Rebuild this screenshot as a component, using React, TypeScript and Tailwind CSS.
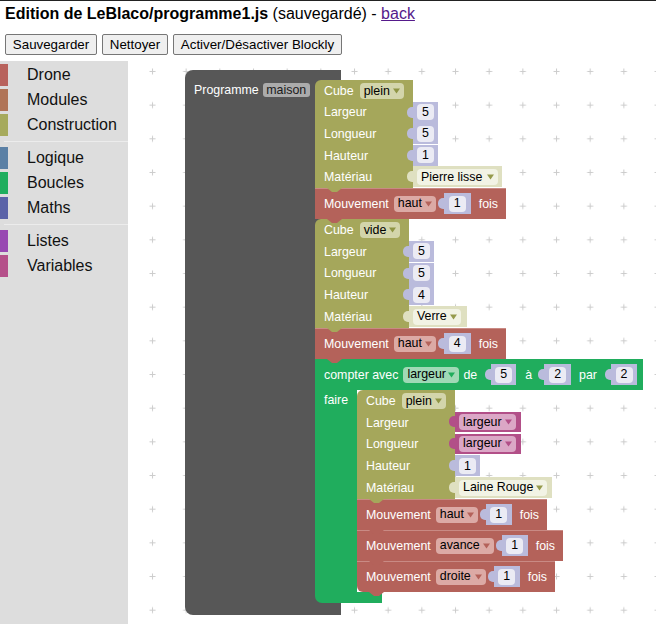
import React from "react";

function Arrow({ fill }: { fill: string }) {
  return (
    <svg width="7" height="6" viewBox="0 0 7 6" className="shrink-0">
      <path d="M0 0.5H7L3.5 5.5Z" className={fill} />
    </svg>
  );
}

function Dropdown({
  label,
  w,
  bg,
  arrow,
  cls = "",
}: {
  label: string;
  w: string;
  bg: string;
  arrow: string;
  cls?: string;
}) {
  return (
    <div
      className={`${w} h-[16px] ${bg} ${cls} rounded-[4px] flex items-center justify-between pl-[4px] pr-[4px] text-black shrink-0`}
    >
      <span className="leading-none">{label}</span>
      <Arrow fill={arrow} />
    </div>
  );
}

function Num({ v, w = "w-[25px]", cls = "" }: { v: string; w?: string; cls?: string }) {
  return (
    <div className={`relative ${w} h-[21px] bg-[#babbdc] flex items-center justify-center shrink-0 ${cls}`}>
      <div className="absolute left-[-6px] top-[5px] w-[6px] h-[11px] rounded-l-[5px] bg-[#babbdc]" />
      <div className="w-[17px] h-[16px] rounded-[4px] bg-[#ebebf4] flex items-center justify-center text-black leading-none">
        {v}
      </div>
    </div>
  );
}

function Mat({ label, w, fw }: { label: string; w: string; fw: string }) {
  return (
    <div className={`relative ${w} h-[21px] bg-[#dfe0c1] flex items-center pl-[4px] shrink-0`}>
      <div className="absolute left-[-6px] top-[5px] w-[6px] h-[11px] rounded-l-[5px] bg-[#dfe0c1]" />
      <Dropdown label={label} w={fw} bg="bg-[#f2f3e5]" arrow="fill-[#959a4c]" />
    </div>
  );
}

function Var() {
  return (
    <div className="relative w-[66px] h-[20px] bg-[#b24f88] flex items-center pl-[4px] shrink-0">
      <div className="absolute left-[-6px] top-[4px] w-[6px] h-[11px] rounded-l-[5px] bg-[#b24f88]" />
      <Dropdown label="largeur" w="w-[57px]" bg="bg-[#dba7c6]" arrow="fill-[#b24f88]" />
    </div>
  );
}

function Notch({ fill }: { fill: string }) {
  return (
    <svg width="15" height="4" viewBox="0 0 15 4" className="absolute left-[12px] bottom-[-4px] z-10">
      <path d="M0 0L5 4H10L15 0Z" className={fill} />
    </svg>
  );
}

type Row = { label: string; value: React.ReactNode };

function Cube({
  w,
  mode,
  modeW,
  h,
  rows,
}: {
  w: string;
  mode: string;
  modeW: string;
  h: string;
  rows: Row[];
}) {
  return (
    <div className={`relative flex flex-col ${h} shrink-0`}>
      <div className={`${w} flex-1 bg-[#a5a75b] rounded-tl-[6px] flex items-center pl-[9px] text-white`}>
        <span>Cube</span>
        <Dropdown label={mode} w={modeW} bg="bg-[#d3d5ab]" arrow="fill-[#8f9545]" cls="ml-[6px]" />
      </div>
      {rows.map((r) => (
        <div key={r.label} className="flex flex-1 items-start">
          <div className={`${w} h-full bg-[#a5a75b] flex items-center pl-[9px] text-white`}>{r.label}</div>
          {r.value}
        </div>
      ))}
      <Notch fill="fill-[#a5a75b]" />
    </div>
  );
}

function Mouv({
  w,
  dir,
  dirW,
  v,
  numW,
  last = false,
}: {
  w: string;
  dir: string;
  dirW: string;
  v: string;
  numW: string;
  last?: boolean;
}) {
  return (
    <div
      className={`relative ${w} h-[31px] bg-[#b4625a] flex items-center pl-[9px] text-white shrink-0 shadow-[inset_0_1px_0_#c98a84] ${
        last ? "rounded-bl-[6px]" : ""
      }`}
    >
      <span>Mouvement</span>
      <Dropdown label={dir} w={dirW} bg="bg-[#dcaaa5]" arrow="fill-[#b4625a]" cls="ml-[5px]" />
      <Num v={v} w={numW} cls="ml-[8px]" />
      <span className="ml-[8px]">fois</span>
      <Notch fill="fill-[#b4625a]" />
    </div>
  );
}

function Loop() {
  return (
    <div className="relative flex flex-col items-start shrink-0">
      <div className="w-[328px] h-[31px] bg-[#20ad5d] flex items-center pl-[9px] text-white">
        <span>compter avec</span>
        <Dropdown label="largeur" w="w-[56px]" bg="bg-[#a0d9b6]" arrow="fill-[#20ad5d]" cls="ml-[5px]" />
        <span className="ml-[4px]">de</span>
        <Num v="5" w="w-[25px]" cls="ml-[14px]" />
        <span className="ml-[9px]">à</span>
        <Num v="2" w="w-[27px]" cls="ml-[12px]" />
        <span className="ml-[8px]">par</span>
        <Num v="2" w="w-[26px]" cls="ml-[14px]" />
      </div>
      <div className="flex">
        <div className="w-[42px] bg-[#20ad5d] pl-[9px] pt-[3px] text-white leading-[14px]">faire</div>
        <div className="flex flex-col items-start">
          <Cube
            w="w-[98px]"
            mode="plein"
            modeW="w-[44px]"
            h="h-[109px]"
            rows={[
              { label: "Largeur", value: <Var /> },
              { label: "Longueur", value: <Var /> },
              { label: "Hauteur", value: <Num v="1" /> },
              { label: "Matériau", value: <Mat label="Laine Rouge" w="w-[97px]" fw="w-[88px]" /> },
            ]}
          />
          <Mouv w="w-[190px]" dir="haut" dirW="w-[42px]" v="1" numW="w-[26px]" />
          <Mouv w="w-[206px]" dir="avance" dirW="w-[58px]" v="1" numW="w-[26px]" />
          <Mouv w="w-[198px]" dir="droite" dirW="w-[50px]" v="1" numW="w-[26px]" last />
        </div>
      </div>
      <div className="w-[67px] h-[11px] bg-[#20ad5d] rounded-bl-[7px]" />
    </div>
  );
}

function Grid() {
  return (
    <svg className="absolute inset-0" width="100%" height="100%">
      <defs>
        <pattern id="grid" x="21" y="7" width="33.67" height="33.67" patternUnits="userSpaceOnUse">
          <path d="M0.5 3.5H6.5M3.5 0.5V6.5" stroke="#cccccc" strokeWidth="1" />
        </pattern>
      </defs>
      <rect width="100%" height="100%" fill="url(#grid)" />
    </svg>
  );
}

const tools: ({ label: string; color: string } | null)[] = [
  { label: "Drone", color: "bg-[#b8625c]" },
  { label: "Modules", color: "bg-[#b07457]" },
  { label: "Construction", color: "bg-[#a6aa5c]" },
  null,
  { label: "Logique", color: "bg-[#5b80a5]" },
  { label: "Boucles", color: "bg-[#1fae5e]" },
  { label: "Maths", color: "bg-[#5b63a8]" },
  null,
  { label: "Listes", color: "bg-[#9848b2]" },
  { label: "Variables", color: "bg-[#b5508a]" },
];

export default function App() {
  return (
    <div className="w-[656px] h-[624px] overflow-hidden bg-white font-['Liberation_Sans',Arial,sans-serif] text-black">
      <div className="h-[1px] bg-[#222222]" />
      <div className="h-[28px] pt-[4px] pl-[5px] text-[16px] leading-[18px]">
        <span className="font-bold">Edition de LeBlaco/programme1.js</span>
        <span> (sauvegardé) - </span>
        <span className="text-[#551a8b] underline">back</span>
      </div>
      <div className="h-[32px] pt-[5px] pl-[5px] flex items-start gap-[5px] text-[13.33px]">
        <button className="w-[92px] h-[21px] bg-[#efefef] border border-[#767676] rounded-[2px] text-black">
          Sauvegarder
        </button>
        <button className="w-[66px] h-[21px] bg-[#efefef] border border-[#767676] rounded-[2px] text-black">
          Nettoyer
        </button>
        <button className="w-[169px] h-[21px] bg-[#efefef] border border-[#767676] rounded-[2px] text-black">
          Activer/Désactiver Blockly
        </button>
      </div>
      <div className="flex h-[563px]">
        <div className="w-[128px] shrink-0 bg-[#dddddd] pt-[3px]">
          {tools.map((t, i) =>
            t ? (
              <div key={t.label} className="h-[25px] flex items-start">
                <div className={`w-[8px] h-[22px] ${t.color}`} />
                <span className="ml-[19px] text-[16px] leading-[22px] text-[#111111]">{t.label}</span>
              </div>
            ) : (
              <div key={"s" + i} className="pt-[2px] pb-[5px] pl-[4px]">
                <div className="h-[1px] bg-[#ececec]" />
              </div>
            )
          )}
        </div>
        <div className="relative flex-1 bg-white overflow-hidden text-[12.4px] leading-[14px]">
          <Grid />
          <div className="absolute left-[57px] top-[9px] flex">
            <div className="w-[156px] h-[545px] bg-[#575757] rounded-tl-[8px] rounded-bl-[8px] flex">
              <div className="w-[130px] shrink-0 pt-[13px] pl-[9px] flex items-start text-white">
                <span>Programme</span>
                <div className="ml-[4px] w-[47px] h-[14px] rounded-[3px] bg-[#ababab] flex items-center justify-center text-[#1a1a1a]">
                  maison
                </div>
              </div>
              <div className="w-[26px] pt-[10px] flex flex-col items-start">
                <Cube
                  w="w-[98px]"
                  mode="plein"
                  modeW="w-[44px]"
                  h="h-[108px]"
                  rows={[
                    { label: "Largeur", value: <Num v="5" /> },
                    { label: "Longueur", value: <Num v="5" /> },
                    { label: "Hauteur", value: <Num v="1" /> },
                    { label: "Matériau", value: <Mat label="Pierre lisse" w="w-[89px]" fw="w-[81px]" /> },
                  ]}
                />
                <Mouv w="w-[191px]" dir="haut" dirW="w-[42px]" v="1" numW="w-[27px]" />
                <Cube
                  w="w-[94px]"
                  mode="vide"
                  modeW="w-[40px]"
                  h="h-[109px]"
                  rows={[
                    { label: "Largeur", value: <Num v="5" /> },
                    { label: "Longueur", value: <Num v="5" /> },
                    { label: "Hauteur", value: <Num v="4" /> },
                    { label: "Matériau", value: <Mat label="Verre" w="w-[58px]" fw="w-[48px]" /> },
                  ]}
                />
                <Mouv w="w-[191px]" dir="haut" dirW="w-[42px]" v="4" numW="w-[27px]" />
                <Loop />
              </div>
            </div>
          </div>
        </div>
      </div>
    </div>
  );
}
